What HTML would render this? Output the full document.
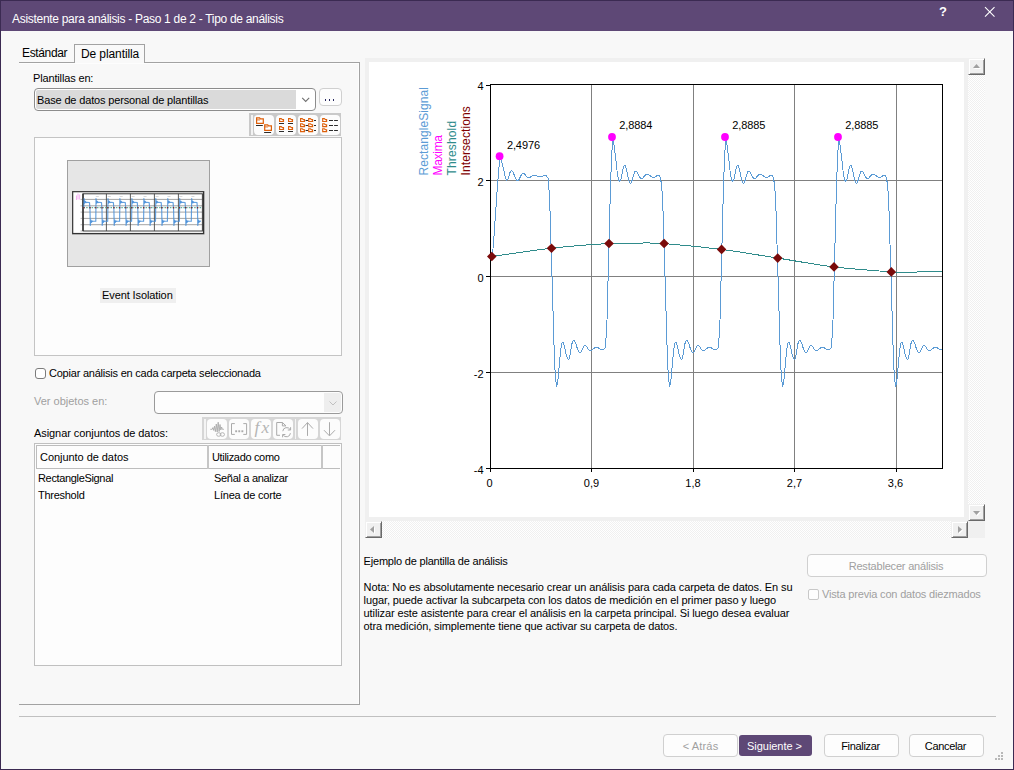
<!DOCTYPE html>
<html lang="es">
<head>
<meta charset="utf-8">
<title>Asistente para análisis</title>
<style>
html,body{margin:0;padding:0;}
body{width:1014px;height:770px;overflow:hidden;background:#f8f8f8;font-family:"Liberation Sans",sans-serif;font-size:11px;color:#000;position:relative;}
.abs{position:absolute;}
svg{display:block;}
#win{position:absolute;left:0;top:0;width:1012px;height:768px;border:1px solid #3b2a52;background:#f8f8f8;}
#title{position:absolute;left:0;top:0;width:1012px;height:30px;background:#5e4876;}
#title .t{position:absolute;left:11px;top:10px;font-size:12px;line-height:16px;color:#fff;letter-spacing:-0.3px;white-space:nowrap;}
.lbl{position:absolute;white-space:nowrap;line-height:13px;letter-spacing:-0.15px;}
.dis{color:#a0a0a0;}
.tbtn{position:absolute;width:20px;height:20px;border-radius:4px;background:#fcfcfc;}
.btn{position:absolute;border:1px solid #d0d0d0;border-radius:4px;background:#fdfdfd;text-align:center;line-height:21px;white-space:nowrap;}
.btn span{position:relative;top:1px;left:-1px;}
.trk{background-color:#f7f7f7;background-image:conic-gradient(#fff 25%,#f0f0f0 0 50%,#fff 0 75%,#f0f0f0 0);background-size:2px 2px;}
.sbtn{position:absolute;width:15px;height:15px;background:#f0f0f0;border-style:solid;border-width:1px;border-color:#f0f0f0 #696969 #696969 #f0f0f0;box-shadow:inset 1px 1px 0 #fff,inset -1px -1px 0 #a0a0a0;}
.sbtn svg{position:absolute;left:-1px;top:-1px;}
</style>
</head>
<body>
<div id="win">
 <div id="title"><div class="t">Asistente para análisis - Paso 1 de 2 - Tipo de análisis</div>
 <div class="abs" style="left:936px;top:3px;width:12px;font:bold 13px 'Liberation Sans',sans-serif;color:#fff;text-align:center;line-height:16px;">?</div>
 <svg class="abs" style="left:983px;top:5px" width="12" height="12" viewBox="0 0 12 12"><path d="M1 1.200L10.500 10.700M10.500 1.200L1 10.700" stroke="#fff" stroke-width="1.1" fill="none"/></svg>
 </div>
</div>
<!-- size grip -->
<svg class="abs" style="left:994px;top:751px" width="10" height="10"><g fill="#b8b8b8"><rect x="7" y="1" width="2" height="2"/><rect x="4" y="4" width="2" height="2"/><rect x="7" y="4" width="2" height="2"/><rect x="1" y="7" width="2" height="2"/><rect x="4" y="7" width="2" height="2"/><rect x="7" y="7" width="2" height="2"/></g></svg>
<!-- tabs -->
<div class="abs" id="tabpanel" style="left:19px;top:62px;width:340px;height:641px;border:1px solid #a2a2a2;border-left:none;background:#f8f8f8;box-shadow:inset -1px 1px 0 #fdfdfd;"></div>
<div class="abs" id="tab2" style="left:74px;top:44px;width:69px;height:18px;border:1px solid #a2a2a2;border-bottom:none;background:#f9f9f9;"></div>
<div class="lbl" style="left:22px;top:46px;font-size:12px;line-height:15px;letter-spacing:-0.35px;">Estándar</div>
<div class="lbl" style="left:81px;top:47px;font-size:12px;line-height:15px;letter-spacing:-0.1px;">De plantilla</div>
<!-- left tab panel contents -->
<div class="lbl" style="left:33px;top:72px;">Plantillas en:</div>
<div class="abs" style="left:34px;top:88px;width:280px;height:21px;border:1px solid #8c8c8c;border-radius:4px;background:#fff;">
  <div class="abs" style="left:1px;top:1px;width:260px;height:19px;background:#dadada;border-radius:2px 0 0 2px;"></div>
  <div class="lbl" style="left:2px;top:5px;">Base de datos personal de plantillas</div>
  <svg class="abs" style="left:265px;top:7px" width="12" height="8" viewBox="0 0 12 8"><path d="M2.2 1.900 L5.700 5.400 L9.200 1.900" fill="none" stroke="#707070" stroke-width="1.1"/></svg>
</div>
<div class="abs" style="left:319px;top:88px;width:21px;height:16px;border:1px solid #d0d0d0;border-radius:4px;background:#fdfdfd;">
  <div class="abs" style="left:4.700px;top:10px;width:1.600px;height:2px;background:#26265e"></div>
  <div class="abs" style="left:8.700px;top:10px;width:1.600px;height:2px;background:#26265e"></div>
  <div class="abs" style="left:12.700px;top:10px;width:1.600px;height:2px;background:#26265e"></div>
</div>
<!-- view toolbar -->
<div class="abs" id="tb1" style="left:249px;top:113px;width:92px;height:23px;background:#c9c9c9;"></div>
<div class="abs" style="left:251px;top:115px;width:2px;height:20px;background:#f2f2f2;"></div>
<div class="tbtn" style="left:254px;top:115px;"></div>
<div class="tbtn" style="left:276px;top:115px;"></div>
<div class="tbtn" style="left:298px;top:115px;"></div>
<div class="tbtn" style="left:320px;top:115px;"></div>
<!-- list box -->
<div class="abs" style="left:34px;top:137px;width:306px;height:217px;border:1px solid #c4c4c4;background:#fdfdfd;"></div>
<div class="abs" style="left:67px;top:160px;width:141px;height:105px;border:1px solid #a0a0a0;background:#e6e6e6;"></div>
<div class="abs" style="left:100px;top:288px;width:76px;height:15px;background:#efefef;"></div>
<div class="lbl" style="left:102px;top:289px;letter-spacing:-0.1px;">Event Isolation</div>
<!-- checkbox -->
<div class="abs" style="left:35px;top:368px;width:9px;height:9px;border:1px solid #7c7c7c;border-radius:3px;background:#fff;"></div>
<div class="lbl" style="left:49px;top:367px;letter-spacing:-0.22px;">Copiar análisis en cada carpeta seleccionada</div>
<div class="lbl dis" style="left:34px;top:395px;letter-spacing:-0.0px;">Ver objetos en:</div>
<div class="abs" style="left:154px;top:391px;width:187px;height:21px;border:1px solid #9a9a9a;border-radius:4px;background:#fdfdfd;">
  <div class="abs" style="left:169px;top:1px;width:17px;height:19px;background:#eee;border-radius:0 2px 2px 0;"></div>
  <svg class="abs" style="left:172.500px;top:7.500px" width="10" height="7" viewBox="0 0 10 7"><path d="M1.5 1.5 L5 5 L8.5 1.5" fill="none" stroke="#c0c0c0" stroke-width="1"/></svg>
</div>
<div class="lbl" style="left:34px;top:427px;letter-spacing:-0.07px;">Asignar conjuntos de datos:</div>
<!-- toolbar 2 -->
<div class="abs" id="tb2" style="left:202px;top:417px;width:139px;height:23px;background:#d6d6d6;"></div>
<div class="abs" style="left:204px;top:419px;width:2px;height:20px;background:#f4f4f4;"></div>
<div class="tbtn" style="left:207px;top:419px;"></div>
<div class="tbtn" style="left:229px;top:419px;"></div>
<div class="tbtn" style="left:251px;top:419px;"></div>
<div class="tbtn" style="left:273px;top:419px;"></div>
<div class="abs" style="left:294.500px;top:419px;width:1px;height:20px;background:#f4f4f4;"></div>
<div class="tbtn" style="left:298px;top:419px;"></div>
<div class="tbtn" style="left:320px;top:419px;"></div>
<!-- table -->
<div class="abs" style="left:34px;top:443px;width:306px;height:221px;border:1px solid #c0c0c0;background:#fdfdfd;"></div>
<div class="abs" style="left:36px;top:445px;width:304px;height:23px;border:1px solid #bdbdbd;border-right:none;box-sizing:border-box;width:304px;height:24px;"></div>
<div class="abs" style="left:207px;top:445px;width:2px;height:24px;background:#c6c6c6;"></div>
<div class="abs" style="left:321px;top:445px;width:2px;height:24px;background:#c6c6c6;"></div>
<div class="lbl" style="left:40px;top:451px;letter-spacing:-0.05px;">Conjunto de datos</div>
<div class="lbl" style="left:212px;top:451px;letter-spacing:-0.33px;">Utilizado como</div>
<div class="lbl" style="left:38px;top:472px;letter-spacing:-0.34px;">RectangleSignal</div>
<div class="lbl" style="left:214px;top:472px;letter-spacing:-0.31px;">Señal a analizar</div>
<div class="lbl" style="left:38px;top:489px;letter-spacing:-0.27px;">Threshold</div>
<div class="lbl" style="left:214px;top:489px;letter-spacing:-0.21px;">Línea de corte</div>
<svg class="abs" style="left:68px;top:161px" width="141" height="105" viewBox="68 161 141 105">
<rect x="72" y="191" width="132.5" height="43.500" fill="#8a8a8a"/>
<rect x="72.700" y="191.700" width="130.800" height="41.800" fill="#fff" stroke="#333" stroke-width="1.150"/>
<path d="M83 199.4H202.400" stroke="#9a9a9a" stroke-width="0.9"/>
<path d="M83 205.8H202.400" stroke="#9a9a9a" stroke-width="0.9"/>
<path d="M83 212.1H202.400" stroke="#9a9a9a" stroke-width="0.9"/>
<path d="M83 218.4H202.400" stroke="#9a9a9a" stroke-width="0.9"/>
<path d="M83 224.7H202.400" stroke="#9a9a9a" stroke-width="0.9"/>
<path d="M106.4 193.800V231" stroke="#4a4a4a" stroke-width="0.9"/>
<path d="M130.4 193.800V231" stroke="#4a4a4a" stroke-width="0.9"/>
<path d="M154.4 193.800V231" stroke="#4a4a4a" stroke-width="0.9"/>
<path d="M178.4 193.800V231" stroke="#4a4a4a" stroke-width="0.9"/>
<rect x="83" y="193.800" width="119.400" height="37.200" fill="none" stroke="#3a3a3a" stroke-width="1"/>
<path d="M83 193.800V231" stroke="#222" stroke-width="1.250"/>
<polyline points="83.3,207.7 83.8,207.7 84.1,198.5 84.7,203.2 85.3,201.3 86.0,202.6 87.0,202.3 89.5,202.6 90.0,210.0 90.3,225.5 90.9,220.0 91.5,222.2 92.3,221.0 93.5,221.3 95.3,221.2 95.8,221.3 96.0,198.5 96.7,203.2 97.2,201.3 98.0,202.6 99.0,202.3 101.5,202.6 102.0,210.0 102.2,225.5 102.9,220.0 103.5,222.2 104.2,221.0 105.5,221.3 107.3,221.2 107.7,221.3 108.0,198.5 108.6,203.2 109.2,201.3 109.9,202.6 110.9,202.3 113.4,202.6 113.9,210.0 114.2,225.5 114.8,220.0 115.4,222.2 116.2,221.0 117.4,221.3 119.2,221.2 119.6,221.3 119.9,198.5 120.5,203.2 121.1,201.3 121.8,202.6 122.8,202.3 125.3,202.6 125.8,210.0 126.1,225.5 126.8,220.0 127.3,222.2 128.2,221.0 129.3,221.3 131.2,221.2 131.6,221.3 131.9,198.5 132.5,203.2 133.1,201.3 133.8,202.6 134.8,202.3 137.3,202.6 137.8,210.0 138.1,225.5 138.7,220.0 139.3,222.2 140.1,221.0 141.3,221.3 143.1,221.2 143.6,221.3 143.9,198.5 144.5,203.2 145.1,201.3 145.8,202.6 146.8,202.3 149.2,202.6 149.8,210.0 150.1,225.5 150.7,220.0 151.2,222.2 152.1,221.0 153.2,221.3 155.1,221.2 155.5,221.3 155.8,198.5 156.4,203.2 157.0,201.3 157.7,202.6 158.7,202.3 161.2,202.6 161.7,210.0 162.0,225.5 162.6,220.0 163.2,222.2 164.0,221.0 165.2,221.3 167.0,221.2 167.4,221.3 167.8,198.5 168.3,203.2 168.9,201.3 169.6,202.6 170.6,202.3 173.1,202.6 173.6,210.0 173.9,225.5 174.5,220.0 175.1,222.2 175.9,221.0 177.1,221.3 179.0,221.2 179.4,221.3 179.7,198.5 180.3,203.2 180.9,201.3 181.6,202.6 182.6,202.3 185.1,202.6 185.6,210.0 185.9,225.5 186.5,220.0 187.1,222.2 187.9,221.0 189.1,221.3 190.9,221.2 191.3,221.3 191.7,198.5 192.2,203.2 192.8,201.3 193.5,202.6 194.5,202.3 197.0,202.6 197.5,210.0 197.8,225.5 198.4,220.0 199.0,222.2 199.8,221.0 201.0,221.3" fill="none" stroke="#4a90d9" stroke-width="1.150" stroke-opacity="0.85" stroke-linejoin="round"/>
<path d="M84.1 200.4l2.800 1.900l-2.800 1.200z" fill="#4a90d9" fill-opacity="0.8"/>
<path d="M90.3 223.6l2.800 -2.300l-2.800 -1z" fill="#4a90d9" fill-opacity="0.8"/>
<path d="M96.0 200.4l2.800 1.900l-2.800 1.200z" fill="#4a90d9" fill-opacity="0.8"/>
<path d="M102.2 223.6l2.800 -2.300l-2.800 -1z" fill="#4a90d9" fill-opacity="0.8"/>
<path d="M108.0 200.4l2.800 1.900l-2.800 1.200z" fill="#4a90d9" fill-opacity="0.8"/>
<path d="M114.2 223.6l2.800 -2.300l-2.800 -1z" fill="#4a90d9" fill-opacity="0.8"/>
<path d="M119.9 200.4l2.800 1.900l-2.800 1.200z" fill="#4a90d9" fill-opacity="0.8"/>
<path d="M126.1 223.6l2.800 -2.300l-2.800 -1z" fill="#4a90d9" fill-opacity="0.8"/>
<path d="M131.9 200.4l2.800 1.900l-2.800 1.200z" fill="#4a90d9" fill-opacity="0.8"/>
<path d="M138.1 223.6l2.800 -2.300l-2.800 -1z" fill="#4a90d9" fill-opacity="0.8"/>
<path d="M143.9 200.4l2.800 1.900l-2.800 1.200z" fill="#4a90d9" fill-opacity="0.8"/>
<path d="M150.1 223.6l2.800 -2.300l-2.800 -1z" fill="#4a90d9" fill-opacity="0.8"/>
<path d="M155.8 200.4l2.800 1.900l-2.800 1.200z" fill="#4a90d9" fill-opacity="0.8"/>
<path d="M162.0 223.6l2.800 -2.300l-2.800 -1z" fill="#4a90d9" fill-opacity="0.8"/>
<path d="M167.8 200.4l2.800 1.900l-2.800 1.200z" fill="#4a90d9" fill-opacity="0.8"/>
<path d="M173.9 223.6l2.800 -2.300l-2.800 -1z" fill="#4a90d9" fill-opacity="0.8"/>
<path d="M179.7 200.4l2.800 1.900l-2.800 1.200z" fill="#4a90d9" fill-opacity="0.8"/>
<path d="M185.9 223.6l2.800 -2.300l-2.800 -1z" fill="#4a90d9" fill-opacity="0.8"/>
<path d="M191.7 200.4l2.800 1.900l-2.800 1.200z" fill="#4a90d9" fill-opacity="0.8"/>
<path d="M197.8 223.6l2.800 -2.300l-2.800 -1z" fill="#4a90d9" fill-opacity="0.8"/>
<path d="M83.500 207.700H202" stroke="#3a9a8a" stroke-width="1" stroke-dasharray="1.500 1.200"/>
<rect x="83.2" y="207.1" width="1.300" height="1.300" fill="#8a1a1a"/>
<rect x="89.4" y="207.1" width="1.300" height="1.300" fill="#8a1a1a"/>
<rect x="95.2" y="207.1" width="1.300" height="1.300" fill="#8a1a1a"/>
<rect x="101.4" y="207.1" width="1.300" height="1.300" fill="#8a1a1a"/>
<rect x="107.1" y="207.1" width="1.300" height="1.300" fill="#8a1a1a"/>
<rect x="113.3" y="207.1" width="1.300" height="1.300" fill="#8a1a1a"/>
<rect x="119.0" y="207.1" width="1.300" height="1.300" fill="#8a1a1a"/>
<rect x="125.2" y="207.1" width="1.300" height="1.300" fill="#8a1a1a"/>
<rect x="131.0" y="207.1" width="1.300" height="1.300" fill="#8a1a1a"/>
<rect x="137.2" y="207.1" width="1.300" height="1.300" fill="#8a1a1a"/>
<rect x="143.0" y="207.1" width="1.300" height="1.300" fill="#8a1a1a"/>
<rect x="149.2" y="207.1" width="1.300" height="1.300" fill="#8a1a1a"/>
<rect x="154.9" y="207.1" width="1.300" height="1.300" fill="#8a1a1a"/>
<rect x="161.1" y="207.1" width="1.300" height="1.300" fill="#8a1a1a"/>
<rect x="166.8" y="207.1" width="1.300" height="1.300" fill="#8a1a1a"/>
<rect x="173.0" y="207.1" width="1.300" height="1.300" fill="#8a1a1a"/>
<rect x="178.8" y="207.1" width="1.300" height="1.300" fill="#8a1a1a"/>
<rect x="185.0" y="207.1" width="1.300" height="1.300" fill="#8a1a1a"/>
<rect x="190.8" y="207.1" width="1.300" height="1.300" fill="#8a1a1a"/>
<rect x="196.9" y="207.1" width="1.300" height="1.300" fill="#8a1a1a"/>
<path d="M76.500 200v-4.500M78 199.500v-6M79.700 199.500v-5" stroke="#f3a0f0" stroke-width="0.800"/>
<path d="M95.8 196.500h3" stroke="#c8c8c8" stroke-width="0.700"/>
<path d="M107.8 196.500h3" stroke="#c8c8c8" stroke-width="0.700"/>
<path d="M119.7 196.500h3" stroke="#c8c8c8" stroke-width="0.700"/>
<path d="M131.6 196.500h3" stroke="#c8c8c8" stroke-width="0.700"/>
<path d="M143.6 196.500h3" stroke="#c8c8c8" stroke-width="0.700"/>
<path d="M155.6 196.500h3" stroke="#c8c8c8" stroke-width="0.700"/>
<path d="M167.5 196.500h3" stroke="#c8c8c8" stroke-width="0.700"/>
<path d="M179.4 196.500h3" stroke="#c8c8c8" stroke-width="0.700"/>
<path d="M191.4 196.500h3" stroke="#c8c8c8" stroke-width="0.700"/>
<path d="M80.500 199.4h1.500" stroke="#999" stroke-width="0.700"/>
<path d="M80.500 205.8h1.500" stroke="#999" stroke-width="0.700"/>
<path d="M80.500 212.1h1.500" stroke="#999" stroke-width="0.700"/>
<path d="M80.500 218.4h1.500" stroke="#999" stroke-width="0.700"/>
<path d="M80.500 224.7h1.500" stroke="#999" stroke-width="0.700"/>
<path d="M80.500 231h1.500" stroke="#999" stroke-width="0.700"/>
</svg>
<svg class="abs" style="left:249px;top:113px" width="92" height="23" viewBox="249 113 92 23">
<path d="M256.60 123.30V117.80H259.60L260.40 118.90H263.30V123.30Z" fill="#fff" stroke="#dd5f0a" stroke-width="1.2"/><path d="M256.60 119.90H260.00" stroke="#dd5f0a" stroke-width="0.9" fill="none"/>
<path d="M256 125.5h6.8" stroke="#2b2b2b" stroke-width="1"/>
<path d="M264.70 130.30V124.80H267.70L268.50 125.90H271.40V130.30Z" fill="#fff" stroke="#dd5f0a" stroke-width="1.2"/><path d="M264.70 126.90H268.10" stroke="#dd5f0a" stroke-width="0.9" fill="none"/>
<path d="M264.1 132.5h7" stroke="#2b2b2b" stroke-width="1"/>
<path d="M279.6 118.6h1.6l1.2 1h1.1v1.9h-3.9z" fill="#fff" stroke="#dd5f0a" stroke-width="1.15"/>
<path d="M279 123.5h5" stroke="#2b2b2b" stroke-width="1"/>
<path d="M279.6 126.6h1.6l1.2 1h1.1v1.9h-3.9z" fill="#fff" stroke="#dd5f0a" stroke-width="1.15"/>
<path d="M279 131.5h5" stroke="#2b2b2b" stroke-width="1"/>
<path d="M288.6 118.6h1.6l1.2 1h1.1v1.9h-3.9z" fill="#fff" stroke="#dd5f0a" stroke-width="1.15"/>
<path d="M288 123.5h5" stroke="#2b2b2b" stroke-width="1"/>
<path d="M288.6 126.6h1.6l1.2 1h1.1v1.9h-3.9z" fill="#fff" stroke="#dd5f0a" stroke-width="1.15"/>
<path d="M288 131.5h5" stroke="#2b2b2b" stroke-width="1"/>
<path d="M305.6 120.5h2.6M314 120.5h2" stroke="#2b2b2b" stroke-width="1"/>
<path d="M300.6 118.6h1.6l1.2 1h1.1v1.9h-3.9z" fill="#fff" stroke="#dd5f0a" stroke-width="1.15"/>
<path d="M308.70000000000005 118.6h1.6l1.2 1h1.1v1.9h-3.9z" fill="#fff" stroke="#dd5f0a" stroke-width="1.15"/>
<path d="M305.6 125.5h2.6M314 125.5h2" stroke="#2b2b2b" stroke-width="1"/>
<path d="M300.6 123.7h1.6l1.2 1h1.1v1.9h-3.9z" fill="#fff" stroke="#dd5f0a" stroke-width="1.15"/>
<path d="M308.70000000000005 123.7h1.6l1.2 1h1.1v1.9h-3.9z" fill="#fff" stroke="#dd5f0a" stroke-width="1.15"/>
<path d="M305.6 130.5h2.6M314 130.5h2" stroke="#2b2b2b" stroke-width="1"/>
<path d="M300.6 128.7h1.6l1.2 1h1.1v1.9h-3.9z" fill="#fff" stroke="#dd5f0a" stroke-width="1.15"/>
<path d="M308.70000000000005 128.7h1.6l1.2 1h1.1v1.9h-3.9z" fill="#fff" stroke="#dd5f0a" stroke-width="1.15"/>
<path d="M322.70000000000005 118.6h1.6l1.2 1h1.1v1.9h-3.9z" fill="#fff" stroke="#dd5f0a" stroke-width="1.15"/>
<path d="M329 120.5h4M334.1 120.5h3.8" stroke="#2b2b2b" stroke-width="1"/>
<path d="M322.70000000000005 123.7h1.6l1.2 1h1.1v1.9h-3.9z" fill="#fff" stroke="#dd5f0a" stroke-width="1.15"/>
<path d="M329 125.5h4M334.1 125.5h3.8" stroke="#2b2b2b" stroke-width="1"/>
<path d="M322.70000000000005 128.7h1.6l1.2 1h1.1v1.9h-3.9z" fill="#fff" stroke="#dd5f0a" stroke-width="1.15"/>
<path d="M329 130.5h4M334.1 130.5h3.8" stroke="#2b2b2b" stroke-width="1"/>
</svg>
<svg class="abs" style="left:202px;top:417px" width="139" height="23" viewBox="202 417 139 23">
<polyline points="210.3,429.3 212.2,429.3 212.9,427.6 213.7,430.4 214.5,426.2 215.4,431.6 216.3,424 217.2,432 218.2,422.2 219.1,431.5 220,424.5 220.8,430 221.6,427 222.4,429.3 223.9,429.3" fill="none" stroke="#aaaaaa" stroke-width="0.9" stroke-linejoin="round"/>
<ellipse cx="218.7" cy="434.5" rx="2.1" ry="1.8" fill="none" stroke="#aaaaaa" stroke-width="0.85"/><ellipse cx="222.4" cy="434.5" rx="2.1" ry="1.8" fill="none" stroke="#aaaaaa" stroke-width="0.85"/>
<path d="M234.8 423.6h-3.3v10.8h3.3M243.3 423.6h3.3v10.8h-3.3" fill="none" stroke="#aaaaaa" stroke-width="1"/>
<rect x="235.2" y="430.3" width="1.9" height="1.9" fill="#aaaaaa"/>
<rect x="238.3" y="430.3" width="1.9" height="1.9" fill="#aaaaaa"/>
<rect x="241.4" y="430.3" width="1.9" height="1.9" fill="#aaaaaa"/>
<text y="432.8" font-family="'Liberation Serif',serif" font-style="italic" font-size="17.5" fill="#b4b4b4"><tspan x="254.4">f</tspan><tspan x="261.6">x</tspan></text>
<path d="M280 435.3h-3.3v-12.8h5.7l3.6 3.4h-3.6v-3.4" fill="none" stroke="#aaaaaa" stroke-width="1"/>
<path d="M282.8 431.2a3.9 3.9 0 0 1 7.3-1.6M290.4 433.2a3.9 3.9 0 0 1-7.3 1.6" fill="none" stroke="#aaaaaa" stroke-width="1"/>
<path d="M290.6 427.2v2.8h-2.8M282.6 437.3v-2.8h2.8" fill="none" stroke="#aaaaaa" stroke-width="1"/>
<path d="M307.5 422.6v13.3M302 428.6l5.5-6 5.5 6" fill="none" stroke="#aaaaaa" stroke-width="1"/>
<path d="M329.5 422.2v13.3M324 430.2l5.500 5.700 5.500-5.700" fill="none" stroke="#aaaaaa" stroke-width="1"/>
</svg>
<!-- chart container -->
<div class="abs" style="left:365px;top:58px;width:620px;height:480px;background:#f0f0f0;"></div>
<div class="abs" style="left:369px;top:62px;width:595px;height:455px;background:#fff;"></div>
<div class="abs trk" style="left:968px;top:58px;width:17px;height:463px;"></div>
<div class="abs trk" style="left:365px;top:521px;width:603px;height:17px;"></div>
<div class="sbtn" style="left:968px;top:58px;"><svg width="17" height="17"><path d="M6 11h7l-3.5-4z" fill="#fff"/><path d="M5 10h7l-3.5-4z" fill="#a0a0a0"/></svg></div>
<div class="sbtn" style="left:968px;top:504px;"><svg width="17" height="17"><path d="M6 8h7l-3.5 4z" fill="#fff"/><path d="M5 7h7l-3.5 4z" fill="#a0a0a0"/></svg></div>
<div class="sbtn" style="left:365px;top:521px;"><svg width="17" height="17"><path d="M10 6v7l-4-3.500z" fill="#fff"/><path d="M9 5v7l-4-3.500z" fill="#a0a0a0"/></svg></div>
<div class="sbtn" style="left:951px;top:521px;"><svg width="17" height="17"><path d="M8 6v7l4-3.500z" fill="#fff"/><path d="M7 5v7l4-3.500z" fill="#a0a0a0"/></svg></div>
<svg class="abs" style="left:369px;top:62px" width="595" height="455" viewBox="369 62 595 455" font-family="'Liberation Sans',sans-serif" font-size="11">
<defs><clipPath id="cp"><rect x="490" y="84" width="453" height="385"/></clipPath></defs>
<path d="M591.5 85V468" stroke="#808080" stroke-width="1" shape-rendering="crispEdges"/>
<path d="M693.5 85V468" stroke="#808080" stroke-width="1" shape-rendering="crispEdges"/>
<path d="M794.5 85V468" stroke="#808080" stroke-width="1" shape-rendering="crispEdges"/>
<path d="M896.5 85V468" stroke="#808080" stroke-width="1" shape-rendering="crispEdges"/>
<path d="M490 180.5H942" stroke="#808080" stroke-width="1" shape-rendering="crispEdges"/>
<path d="M490 276.5H942" stroke="#808080" stroke-width="1" shape-rendering="crispEdges"/>
<path d="M490 372.5H942" stroke="#808080" stroke-width="1" shape-rendering="crispEdges"/>
<g clip-path="url(#cp)"><polyline points="491.3,257.0 492.5,255.0 494.0,236.0 497.8,181.0 499.3,163.0 500.0,157.0 500.8,159.0 503.4,168.0 505.2,176.5 506.2,179.6 506.9,180.2 507.4,179.8 508.0,178.8 508.6,177.2 509.1,175.4 509.6,173.6 510.2,172.0 510.8,171.0 511.3,170.6 512.1,171.0 512.9,172.1 513.7,173.7 514.5,175.6 515.2,177.6 516.0,179.2 516.8,180.3 517.6,180.7 518.3,180.4 519.0,179.6 519.6,178.4 520.3,176.9 521.0,175.5 521.6,174.3 522.3,173.5 523.0,173.2 523.7,173.4 524.4,173.9 525.1,174.6 525.8,175.5 526.4,176.4 527.1,177.1 527.8,177.6 528.5,177.8 529.2,177.7 529.9,177.4 530.6,177.0 531.2,176.5 531.9,176.0 532.6,175.6 533.3,175.3 534.0,175.2 534.8,175.3 535.5,175.4 536.2,175.7 537.0,175.9 537.8,176.2 538.5,176.5 539.2,176.6 540.0,176.7 540.7,176.7 541.4,176.5 542.1,176.3 542.8,176.1 543.5,175.8 544.2,175.6 544.9,175.4 545.6,175.4 545.9,175.5 546.2,175.7 546.5,176.0 546.8,176.4 547.1,176.9 547.4,177.2 547.7,177.4 548.0,177.5 549.6,197.0 553.3,320.0 554.6,365.0 556.4,386.5 557.1,384.8 557.9,380.0 558.6,372.8 559.4,364.2 560.1,355.7 560.9,348.5 561.6,343.7 562.4,342.0 563.1,342.7 563.9,344.6 564.6,347.4 565.4,350.8 566.1,354.1 566.9,356.9 567.6,358.8 568.4,359.5 569.0,358.8 569.6,356.7 570.3,353.6 570.9,349.9 571.5,346.2 572.1,343.1 572.8,341.0 573.4,340.3 574.2,340.8 575.0,342.1 575.9,344.1 576.7,346.5 577.5,348.9 578.4,350.9 579.2,352.2 580.0,352.7 580.6,352.4 581.2,351.6 581.9,350.4 582.5,348.9 583.1,347.5 583.8,346.3 584.4,345.5 585.0,345.2 585.6,345.4 586.3,346.0 587.0,346.9 587.6,347.9 588.2,349.0 588.9,349.9 589.6,350.5 590.2,350.7 591.0,350.6 591.7,350.2 592.5,349.6 593.2,348.9 594.0,348.3 594.7,347.7 595.5,347.3 596.2,347.2 597.0,347.3 597.8,347.6 598.6,348.0 599.5,348.5 600.3,349.0 601.1,349.4 601.9,349.7 602.7,349.8 605.0,348.5 606.0,338.0 607.0,320.0 610.6,181.0 612.0,150.0 612.7,138.0 613.5,141.0 616.0,161.0 617.5,175.0 618.8,180.4 619.7,181.5 620.3,180.9 620.9,179.1 621.5,176.5 622.2,173.3 622.8,170.2 623.4,167.6 624.0,165.8 624.6,165.2 625.3,165.9 626.0,167.9 626.7,170.8 627.5,174.3 628.2,177.8 628.9,180.7 629.6,182.7 630.3,183.4 631.0,182.9 631.6,181.6 632.3,179.6 633.0,177.2 633.7,174.9 634.4,172.9 635.0,171.6 635.7,171.1 636.4,171.4 637.2,172.2 637.9,173.4 638.6,174.9 639.3,176.4 640.0,177.6 640.8,178.4 641.5,178.7 642.2,178.5 642.9,178.0 643.6,177.2 644.2,176.3 644.9,175.5 645.6,174.7 646.3,174.2 647.0,174.0 647.8,174.1 648.6,174.5 649.4,175.1 650.2,175.8 651.0,176.4 651.8,177.0 652.6,177.4 653.4,177.5 654.0,177.4 654.7,177.1 655.4,176.8 656.0,176.3 656.6,175.8 657.3,175.5 658.0,175.2 658.6,175.1 658.9,175.2 659.1,175.5 659.4,175.8 659.6,176.3 659.9,176.8 660.1,177.1 660.4,177.4 660.6,177.5 662.6,197.0 666.3,320.0 667.6,365.0 669.4,386.5 670.1,384.8 670.9,380.0 671.6,372.8 672.4,364.2 673.1,355.7 673.9,348.5 674.6,343.7 675.4,342.0 676.1,342.7 676.9,344.6 677.6,347.4 678.4,350.8 679.1,354.1 679.9,356.9 680.6,358.8 681.4,359.5 682.0,358.8 682.6,356.7 683.3,353.6 683.9,349.9 684.5,346.2 685.1,343.1 685.8,341.0 686.4,340.3 687.2,340.8 688.0,342.1 688.9,344.1 689.7,346.5 690.5,348.9 691.4,350.9 692.2,352.2 693.0,352.7 693.6,352.4 694.2,351.6 694.9,350.4 695.5,348.9 696.1,347.5 696.8,346.3 697.4,345.5 698.0,345.2 698.6,345.4 699.3,346.0 700.0,346.9 700.6,347.9 701.2,349.0 701.9,349.9 702.6,350.5 703.2,350.7 704.0,350.6 704.7,350.2 705.5,349.6 706.2,348.9 707.0,348.3 707.7,347.7 708.5,347.3 709.2,347.2 710.0,347.3 710.8,347.6 711.6,348.0 712.5,348.5 713.3,349.0 714.1,349.4 714.9,349.7 715.7,349.8 718.0,348.5 719.0,338.0 720.0,320.0 723.6,181.0 725.0,150.0 725.7,138.0 726.5,141.0 729.0,161.0 730.5,175.0 731.8,180.4 732.7,181.5 733.3,180.9 733.9,179.1 734.5,176.5 735.2,173.3 735.8,170.2 736.4,167.6 737.0,165.8 737.6,165.2 738.3,165.9 739.0,167.9 739.7,170.8 740.5,174.3 741.2,177.8 741.9,180.7 742.6,182.7 743.3,183.4 744.0,182.9 744.6,181.6 745.3,179.6 746.0,177.2 746.7,174.9 747.4,172.9 748.0,171.6 748.7,171.1 749.4,171.4 750.2,172.2 750.9,173.4 751.6,174.9 752.3,176.4 753.0,177.6 753.8,178.4 754.5,178.7 755.2,178.5 755.9,178.0 756.6,177.2 757.2,176.3 757.9,175.5 758.6,174.7 759.3,174.2 760.0,174.0 760.8,174.1 761.6,174.5 762.4,175.1 763.2,175.8 764.0,176.4 764.8,177.0 765.6,177.4 766.4,177.5 767.0,177.4 767.7,177.1 768.4,176.8 769.0,176.3 769.6,175.8 770.3,175.5 771.0,175.2 771.6,175.1 771.9,175.2 772.1,175.5 772.4,175.8 772.6,176.3 772.9,176.8 773.1,177.1 773.4,177.4 773.6,177.5 775.6,197.0 779.3,320.0 780.6,365.0 782.4,386.5 783.1,384.8 783.9,380.0 784.6,372.8 785.4,364.2 786.1,355.7 786.9,348.5 787.6,343.7 788.4,342.0 789.1,342.7 789.9,344.6 790.6,347.4 791.4,350.8 792.1,354.1 792.9,356.9 793.6,358.8 794.4,359.5 795.0,358.8 795.6,356.7 796.3,353.6 796.9,349.9 797.5,346.2 798.1,343.1 798.8,341.0 799.4,340.3 800.2,340.8 801.0,342.1 801.9,344.1 802.7,346.5 803.5,348.9 804.4,350.9 805.2,352.2 806.0,352.7 806.6,352.4 807.2,351.6 807.9,350.4 808.5,348.9 809.1,347.5 809.8,346.3 810.4,345.5 811.0,345.2 811.6,345.4 812.3,346.0 813.0,346.9 813.6,347.9 814.2,349.0 814.9,349.9 815.6,350.5 816.2,350.7 817.0,350.6 817.7,350.2 818.5,349.6 819.2,348.9 820.0,348.3 820.7,347.7 821.5,347.3 822.2,347.2 823.0,347.3 823.8,347.6 824.6,348.0 825.5,348.5 826.3,349.0 827.1,349.4 827.9,349.7 828.7,349.8 831.0,348.5 832.0,338.0 833.0,320.0 836.6,181.0 838.0,150.0 838.7,138.0 839.5,141.0 842.0,161.0 843.5,175.0 844.8,180.4 845.7,181.5 846.3,180.9 846.9,179.1 847.5,176.5 848.2,173.3 848.8,170.2 849.4,167.6 850.0,165.8 850.6,165.2 851.3,165.9 852.0,167.9 852.7,170.8 853.5,174.3 854.2,177.8 854.9,180.7 855.6,182.7 856.3,183.4 857.0,182.9 857.6,181.6 858.3,179.6 859.0,177.2 859.7,174.9 860.4,172.9 861.0,171.6 861.7,171.1 862.4,171.4 863.2,172.2 863.9,173.4 864.6,174.9 865.3,176.4 866.0,177.6 866.8,178.4 867.5,178.7 868.2,178.5 868.9,178.0 869.6,177.2 870.2,176.3 870.9,175.5 871.6,174.7 872.3,174.2 873.0,174.0 873.8,174.1 874.6,174.5 875.4,175.1 876.2,175.8 877.0,176.4 877.8,177.0 878.6,177.4 879.4,177.5 880.0,177.4 880.7,177.1 881.4,176.8 882.0,176.3 882.6,175.8 883.3,175.5 884.0,175.2 884.6,175.1 884.9,175.2 885.1,175.5 885.4,175.8 885.6,176.3 885.9,176.8 886.1,177.1 886.4,177.4 886.6,177.5 888.6,197.0 892.3,320.0 893.6,365.0 895.4,386.5 896.1,384.8 896.9,380.0 897.6,372.8 898.4,364.2 899.1,355.7 899.9,348.5 900.6,343.7 901.4,342.0 902.1,342.7 902.9,344.6 903.6,347.4 904.4,350.8 905.1,354.1 905.9,356.9 906.6,358.8 907.4,359.5 908.0,358.8 908.6,356.7 909.3,353.6 909.9,349.9 910.5,346.2 911.1,343.1 911.8,341.0 912.4,340.3 913.2,340.8 914.0,342.1 914.9,344.1 915.7,346.5 916.5,348.9 917.4,350.9 918.2,352.2 919.0,352.7 919.6,352.4 920.2,351.6 920.9,350.4 921.5,348.9 922.1,347.5 922.8,346.3 923.4,345.5 924.0,345.2 924.6,345.4 925.3,346.0 926.0,346.9 926.6,347.9 927.2,349.0 927.9,349.9 928.6,350.5 929.2,350.7 930.0,350.6 930.7,350.2 931.5,349.6 932.2,348.9 933.0,348.3 933.7,347.7 934.5,347.3 935.2,347.2 936.0,347.3 936.8,347.6 937.6,348.0 938.5,348.5 939.3,349.0 940.1,349.4 940.9,349.7 941.7,349.8 942.5,349.3" fill="none" stroke="#5b9bd5" stroke-width="1" stroke-linejoin="round" shape-rendering="crispEdges"/>
<path d="M491.8,256.5 C501.8,255.1 532.0,250.4 551.5,248.2 C571.0,246.0 594.9,244.3 609.0,243.5 C623.1,242.7 626.8,243.1 636.0,243.1 C645.2,243.1 649.8,242.5 664.1,243.6 C678.4,244.7 702.7,247.0 721.6,249.4 C740.5,251.8 759.0,255.2 777.7,258.1 C796.4,261.0 815.1,264.6 834.0,266.9 C852.9,269.2 879.8,271.0 891.3,271.9 C902.8,272.8 899.2,272.0 903.0,272.1 C906.8,272.2 911.0,272.4 914.0,272.3 C917.0,272.2 916.3,271.8 921.0,271.6 C925.7,271.4 938.5,271.4 942.0,271.3" fill="none" stroke="#2f8b8b" stroke-width="1" shape-rendering="crispEdges"/></g>
<rect x="490.5" y="84.5" width="452" height="384" fill="none" stroke="#000" stroke-width="1" shape-rendering="crispEdges"/>
<path d="M486 85.5H490" stroke="#000" shape-rendering="crispEdges"/>
<path d="M486 180.5H490" stroke="#000" shape-rendering="crispEdges"/>
<path d="M486 276.5H490" stroke="#000" shape-rendering="crispEdges"/>
<path d="M486 372.5H490" stroke="#000" shape-rendering="crispEdges"/>
<path d="M486 468.5H490" stroke="#000" shape-rendering="crispEdges"/>
<path d="M490.5 469V472" stroke="#000" shape-rendering="crispEdges"/>
<path d="M591.5 469V472" stroke="#000" shape-rendering="crispEdges"/>
<path d="M693.5 469V472" stroke="#000" shape-rendering="crispEdges"/>
<path d="M794.5 469V472" stroke="#000" shape-rendering="crispEdges"/>
<path d="M896.5 469V472" stroke="#000" shape-rendering="crispEdges"/>
<path d="M487.0 256.5L491.8 251.7L496.6 256.5L491.8 261.3z" fill="#7a0a0a"/>
<path d="M546.7 248.2L551.5 243.4L556.3 248.2L551.5 253.0z" fill="#7a0a0a"/>
<path d="M604.2 243.5L609.0 238.7L613.8 243.5L609.0 248.3z" fill="#7a0a0a"/>
<path d="M659.3 243.5L664.1 238.7L668.9 243.5L664.1 248.3z" fill="#7a0a0a"/>
<path d="M716.8 249.4L721.6 244.6L726.4 249.4L721.6 254.2z" fill="#7a0a0a"/>
<path d="M772.9 258.1L777.7 253.3L782.5 258.1L777.7 262.9z" fill="#7a0a0a"/>
<path d="M829.2 266.9L834.0 262.1L838.8 266.9L834.0 271.7z" fill="#7a0a0a"/>
<path d="M886.5 271.9L891.3 267.1L896.1 271.9L891.3 276.7z" fill="#7a0a0a"/>
<circle cx="499.6" cy="156.2" r="3.9" fill="#ff00ff"/>
<text x="506.9" y="148.5" letter-spacing="-0.1">2,4976</text>
<circle cx="612" cy="137" r="3.9" fill="#ff00ff"/>
<text x="619.3" y="129.3" letter-spacing="-0.1">2,8884</text>
<circle cx="725" cy="137" r="3.9" fill="#ff00ff"/>
<text x="732.3" y="129.3" letter-spacing="-0.1">2,8885</text>
<circle cx="838" cy="137" r="3.9" fill="#ff00ff"/>
<text x="845.3" y="129.3" letter-spacing="-0.1">2,8885</text>
<text x="483.6" y="90" text-anchor="end">4</text>
<text x="483.6" y="186" text-anchor="end">2</text>
<text x="483.6" y="282" text-anchor="end">0</text>
<text x="483.6" y="378" text-anchor="end">-2</text>
<text x="483.6" y="474" text-anchor="end">-4</text>
<text x="489.5" y="486.6" text-anchor="middle">0</text>
<text x="591.5" y="486.6" text-anchor="middle">0,9</text>
<text x="693" y="486.6" text-anchor="middle">1,8</text>
<text x="794.5" y="486.6" text-anchor="middle">2,7</text>
<text x="895.5" y="486.6" text-anchor="middle">3,6</text>
<text transform="translate(427.9 175.5) rotate(-90)" font-size="12" fill="#5b9bd5" letter-spacing="0.07">RectangleSignal</text>
<text transform="translate(441.8 175.5) rotate(-90)" font-size="12" fill="#ff00ff" letter-spacing="-0.3">Maxima</text>
<text transform="translate(456.1 175.5) rotate(-90)" font-size="12" fill="#2f8b8b" letter-spacing="0.15">Threshold</text>
<text transform="translate(470.4 175.5) rotate(-90)" font-size="12" fill="#800000" letter-spacing="0.1">Intersections</text>
</svg>
<!-- text under chart -->
<div class="lbl" style="left:363.600px;top:555px;letter-spacing:-0.2px;">Ejemplo de plantilla de análisis</div>
<div class="lbl" style="left:363.600px;top:581px;letter-spacing:-0.11px;">Nota: No es absolutamente necesario crear un análisis para cada carpeta de datos. En su</div>
<div class="lbl" style="left:363.600px;top:594px;letter-spacing:-0.11px;">lugar, puede activar la subcarpeta con los datos de medición en el primer paso y luego</div>
<div class="lbl" style="left:363.600px;top:607px;letter-spacing:-0.11px;">utilizar este asistente para crear el análisis en la carpeta principal. Si luego desea evaluar</div>
<div class="lbl" style="left:363.600px;top:620px;letter-spacing:-0.11px;">otra medición, simplemente tiene que activar su carpeta de datos.</div>
<div class="btn" style="left:807px;top:554px;width:178px;height:21px;"><span class="dis" style="letter-spacing:-0.19px;">Restablecer análisis</span></div>
<div class="abs" style="left:808px;top:589px;width:9px;height:9px;border:1px solid #c8c8c8;border-radius:2px;background:#fdfdfd;"></div>
<div class="lbl dis" style="left:822px;top:588px;letter-spacing:-0.175px;line-height:13px;">Vista previa con datos diezmados</div>
<!-- bottom -->
<div class="abs" style="left:19px;top:716px;width:977px;height:1px;background:#c0c0c0;"></div>
<div class="btn" style="left:663px;top:734px;width:73px;height:21px;"><span class="dis" style="letter-spacing:0.15px;left:0;">&lt; Atrás</span></div>
<div class="btn" style="left:739px;top:735px;width:73px;height:21px;border:none;background:#5e4876;border-radius:3px;"><span style="letter-spacing:-0.04px;color:#fff;">Siguiente &gt;</span></div>
<div class="btn" style="left:824px;top:734px;width:73px;height:21px;"><span style="letter-spacing:-0.32px;">Finalizar</span></div>
<div class="btn" style="left:909px;top:734px;width:73px;height:21px;"><span style="letter-spacing:-0.34px;">Cancelar</span></div>

</body>
</html>
